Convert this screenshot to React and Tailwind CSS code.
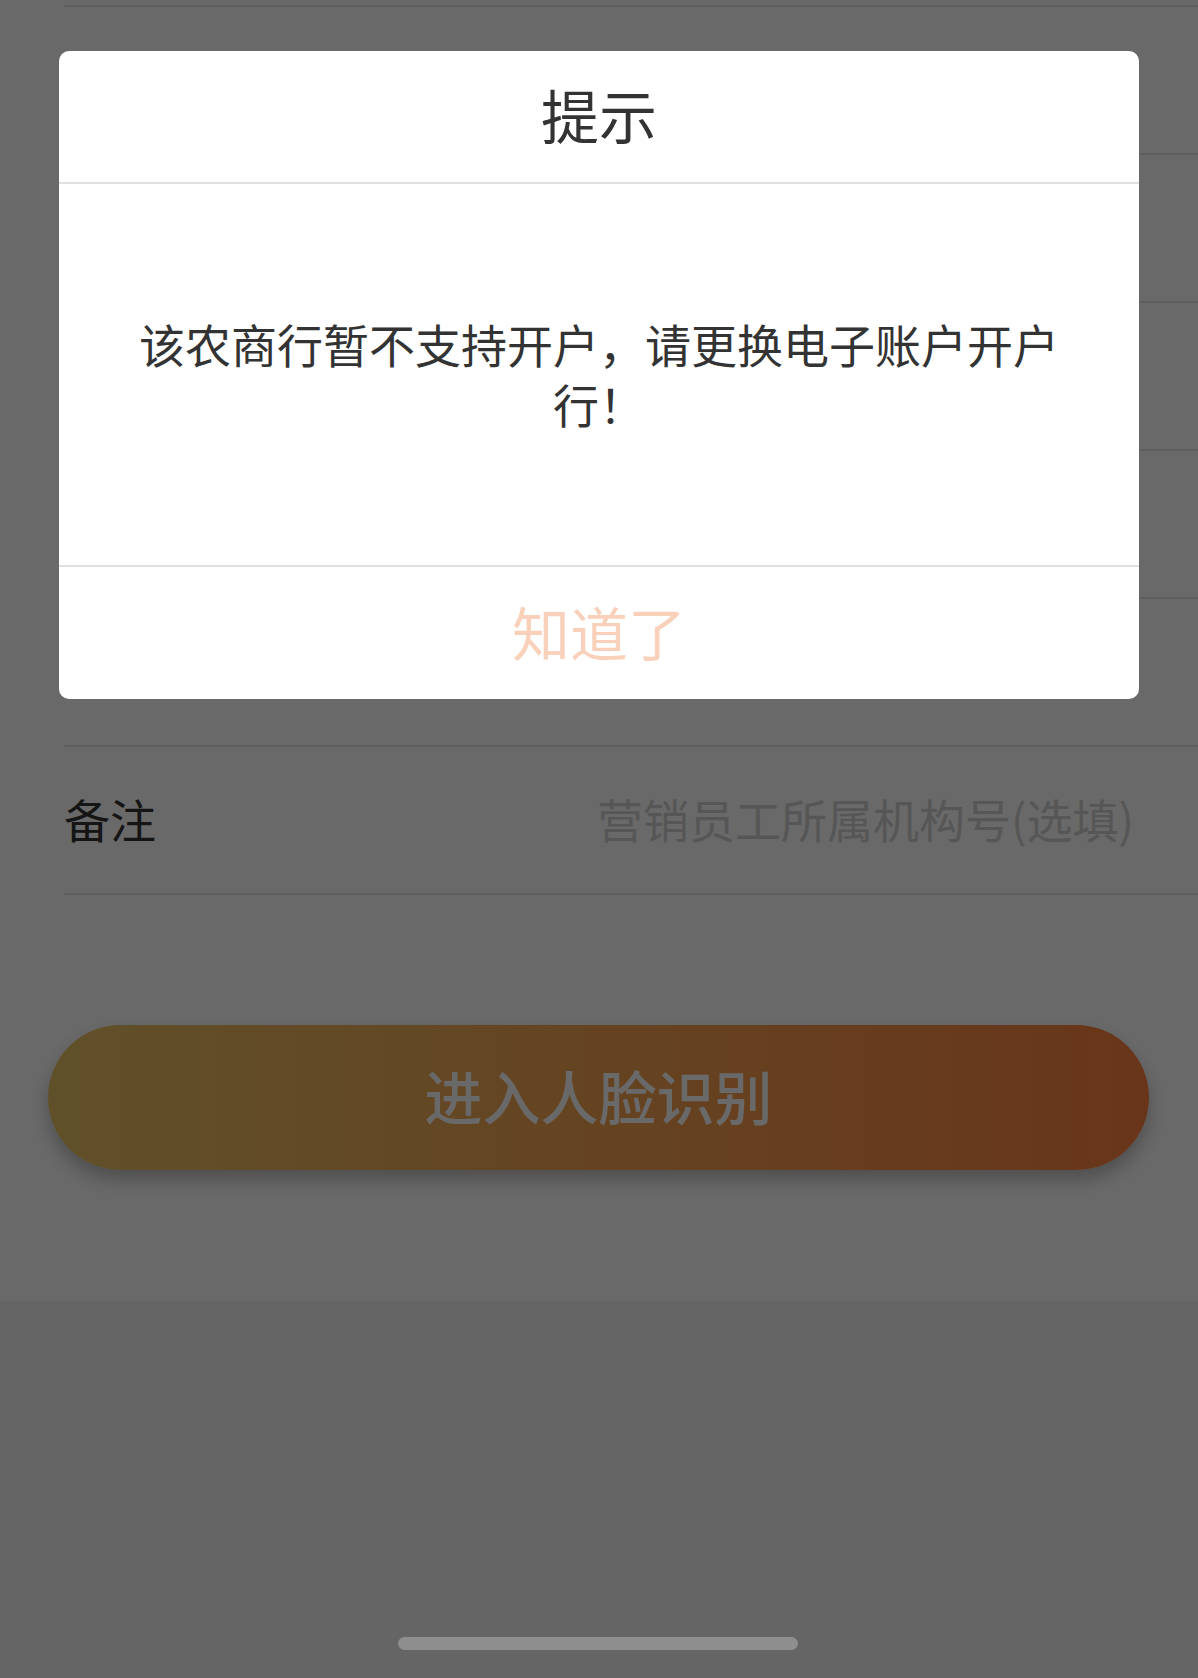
import React from 'react';

const FormRow = ({ label, placeholder }) => {
  return (
    <div className="ml-[64px] h-[148px] border-b-2 border-[#e5e5e5] flex items-center justify-between pr-[64px] pb-[4px]">
      {label && <span className="text-[46px] leading-none text-[#333333]">{label}</span>}
      {placeholder && <span className="text-[46px] leading-none text-[#d2d2d2]">{placeholder}</span>}
    </div>
  );
};

const App = () => {
  return (
    <div
      className="relative w-[1198px] h-[1678px] overflow-hidden bg-[#f5f5f5]"
      style={{ fontFamily: '"Noto Sans CJK SC", "Noto Sans", sans-serif' }}
    >
      {/* Page under the dialog */}
      <div className="bg-white pb-[131px]">
        <div className="ml-[64px] h-[7px] border-b-2 border-[#e5e5e5]" />
        <FormRow />
        <FormRow />
        <FormRow />
        <FormRow />
        <FormRow />
        <FormRow label="备注" placeholder="营销员工所属机构号(选填)" />

        <div className="mt-[130px] ml-[48px] mr-[49px]">
          <button className="w-full h-[145px] pb-[6px] rounded-full bg-gradient-to-r from-[#e8c364] to-[#fe823f] shadow-[0_10px_18px_rgba(0,0,0,0.25)] flex items-center justify-center">
            <span className="text-[58px] leading-none font-medium text-white">进入人脸识别</span>
          </button>
        </div>
      </div>

      {/* Mask */}
      <div className="absolute inset-0 bg-black/[0.59]" />

      {/* Dialog */}
      <div className="absolute left-[59px] top-[51px] w-[1080px] bg-white rounded-[10px] overflow-hidden">
        <div className="h-[133px] pb-[5px] border-b-2 border-[#e0e0e0] flex items-center justify-center">
          <span className="text-[58px] leading-none text-[#333333]">提示</span>
        </div>
        <div className="h-[383px] pb-[4px] border-b-2 border-[#e0e0e0] flex items-center justify-center px-[64px]">
          <p className="text-[46px] leading-[60px] text-[#333333] text-center">
            该农商行暂不支持开户，请更换电子账户开户行！
          </p>
        </div>
        <div className="h-[132px] pb-[4px] flex items-center justify-center">
          <span className="text-[58px] leading-none text-[#f9d1bb]">知道了</span>
        </div>
      </div>

      {/* Home indicator */}
      <div className="absolute left-[398px] top-[1637px] w-[400px] h-[13px] rounded-full bg-[#8e8e8e]" />
    </div>
  );
};

export default App;
